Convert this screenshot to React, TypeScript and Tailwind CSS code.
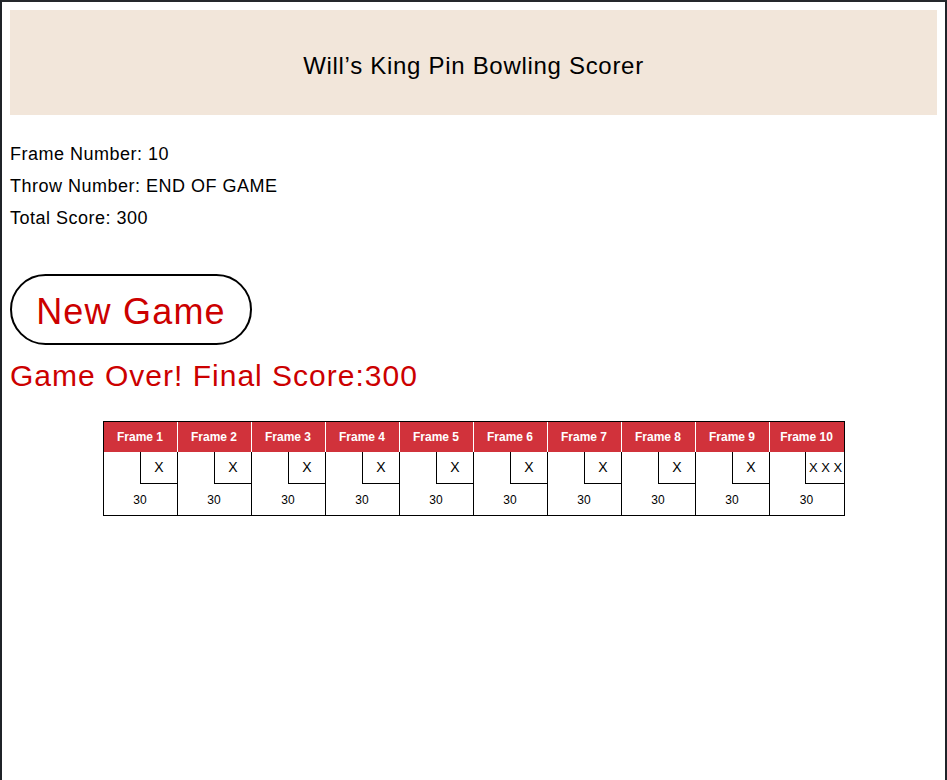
import React from "react";

const frames = [
  { name: "Frame 1", throws: "X", score: 30 },
  { name: "Frame 2", throws: "X", score: 30 },
  { name: "Frame 3", throws: "X", score: 30 },
  { name: "Frame 4", throws: "X", score: 30 },
  { name: "Frame 5", throws: "X", score: 30 },
  { name: "Frame 6", throws: "X", score: 30 },
  { name: "Frame 7", throws: "X", score: 30 },
  { name: "Frame 8", throws: "X", score: 30 },
  { name: "Frame 9", throws: "X", score: 30 },
  { name: "Frame 10", throws: "X X X", score: 30 },
];

const ScoreCard = () => (
  <div className="mx-auto flex w-[742px] border border-black font-['Liberation_Sans',Arial,sans-serif] tracking-normal">
    {frames.map((frame, i) => {
      const last = i === frames.length - 1;
      return (
        <div key={frame.name} className="flex-1 flex flex-col">
          <div
            className={`h-[30px] bg-[#d1323b] text-white text-[12px] font-bold flex items-center justify-center ${
              last ? "" : "border-r border-white"
            }`}
          >
            {frame.name}
          </div>
          <div className={`flex flex-col ${last ? "" : "border-r border-black"}`}>
            <div className="h-[32px] flex justify-end">
              <div
                className={`${
                  last ? "w-[39px] text-[13px] pl-[2px]" : "w-[37px] text-[14px] pl-[1px]"
                } border-l border-b border-black flex items-center justify-center text-black`}
              >
                {frame.throws}
              </div>
            </div>
            <div className="h-[31px] flex items-center justify-center text-[12px] text-black">
              {frame.score}
            </div>
          </div>
        </div>
      );
    })}
  </div>
);

const App = () => {
  return (
    <div className="min-h-screen box-border border-t-2 border-x-2 border-t-[#25282c] border-x-[#1f2328] bg-white px-2 pt-2 font-['Liberation_Sans',Arial,sans-serif] text-black">
      <header className="h-[105px] bg-[#f2e6da] flex items-center justify-center pt-[7px]">
        <h1 className="text-[24px] font-normal tracking-[0.7px]">Will’s King Pin Bowling Scorer</h1>
      </header>

      <div className="mt-[23px] text-[18px] leading-[32px] tracking-[0.5px]">
        <p>Frame Number: 10</p>
        <p>Throw Number: END OF GAME</p>
        <p>Total Score: 300</p>
      </div>

      <button className="mt-[40px] w-[242px] h-[71px] pt-1 rounded-full border-2 border-black bg-white text-[#cc0000] text-[36px] tracking-[1.2px] font-['Liberation_Sans',Arial,sans-serif]">
        New Game
      </button>

      <p className="mt-[13px] text-[#cc0000] text-[30px] leading-[36px] tracking-[1px]">Game Over! Final Score:300</p>

      <div className="mt-[27px]">
        <ScoreCard />
      </div>
    </div>
  );
};

export default App;
